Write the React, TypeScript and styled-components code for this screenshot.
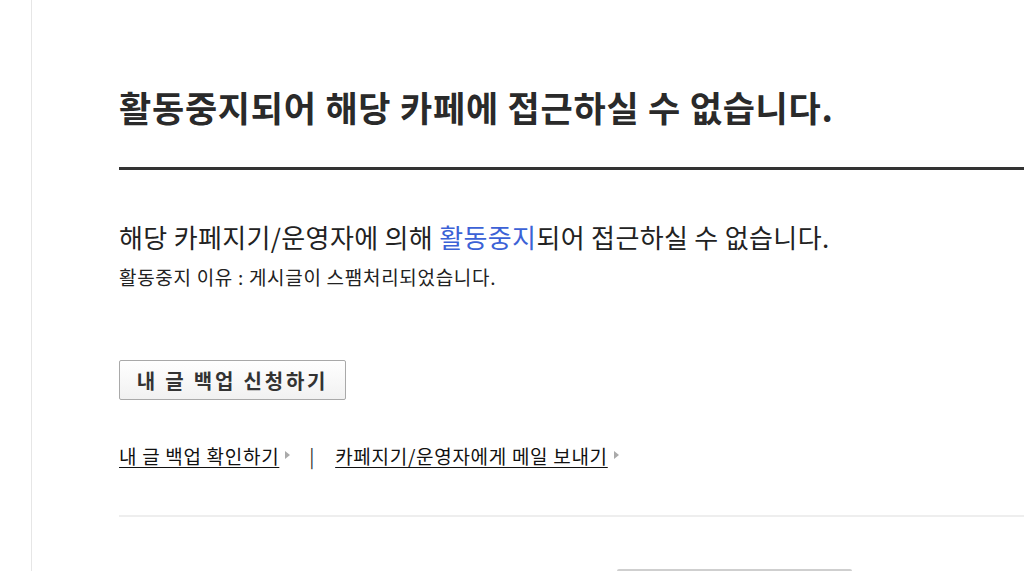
import React from 'react';
import styled, { createGlobalStyle } from 'styled-components';

// STYLES
const GlobalStyle = createGlobalStyle`
  html, body {
    margin: 0;
    padding: 0;
    background: #fff;
    overflow: hidden;
  }
  body {
    font-family: "Noto Sans CJK KR", "Noto Sans", sans-serif;
    color: #222;
  }
`;

const Page = styled.div`
  padding-left: 31px;
  height: 571px;
  overflow: hidden;
`;

const Frame = styled.div`
  border-left: 1px solid #e6e6e6;
  min-height: 571px;
  padding: 83px 0 0 87px;
`;

const Title = styled.h2`
  margin: 0;
  padding-bottom: 36px;
  border-bottom: 3px solid #333;
  font-size: 35px;
  line-height: 48px;
  font-weight: 700;
  color: #2a2a2a;
  letter-spacing: 0.75px;
  white-space: nowrap;
`;

const Message = styled.p`
  margin: 49px 0 0;
  font-size: 26px;
  line-height: 36px;
  color: #222;
  letter-spacing: 0.35px;
  white-space: nowrap;
`;

const Highlight = styled.span`
  color: #3c62d6;
`;

const Reason = styled.p`
  margin: 9px 0 0;
  font-size: 19px;
  line-height: 26px;
  color: #222;
  letter-spacing: 0.7px;
  white-space: nowrap;
`;

const BackupButton = styled.button`
  display: block;
  margin-top: 70px;
  width: 227px;
  height: 40px;
  border: 1px solid #a9a9a9;
  border-radius: 2px;
  background: linear-gradient(#ffffff, #f1f1f1);
  font-family: "Noto Sans CJK KR", sans-serif;
  font-size: 20px;
  font-weight: 700;
  letter-spacing: 2.8px;
  color: #333;
  cursor: pointer;
  padding: 0;
`;

const LinkRow = styled.div`
  display: flex;
  align-items: center;
  margin-top: 40px;
  height: 30px;
  font-size: 19px;
  letter-spacing: 0.7px;
  white-space: nowrap;
`;

const TextLink = styled.a`
  color: #111;
  text-decoration: underline;
  text-underline-offset: 3px;
  text-decoration-thickness: 1px;
`;

const Arrow = styled.span`
  display: inline-block;
  width: 0;
  height: 0;
  margin-left: 6px;
  border-left: 5px solid #aaa;
  border-top: 4px solid transparent;
  border-bottom: 4px solid transparent;
`;

const Sep = styled.span`
  margin: 0 20px 0 19px;
  color: #333;
`;

const Rule = styled.hr`
  margin: 45px 0 0;
  border: 0;
  border-top: 2px solid #eeeeee;
`;

const BottomBox = styled.div`
  margin: 52px 0 0 498px;
  width: 235px;
  height: 30px;
  border-top: 2px solid #cfcfcf;
  border-radius: 2px 2px 0 0;
`;

// COMPONENT
const App: React.FC = () => {
  return (
    <Page>
      <GlobalStyle />
      <Frame>
        <Title>활동중지되어 해당 카페에 접근하실 수 없습니다.</Title>

        <Message>
          해당 카페지기/운영자에 의해 <Highlight>활동중지</Highlight>되어 접근하실 수 없습니다.
        </Message>
        <Reason>활동중지 이유 : 게시글이 스팸처리되었습니다.</Reason>

        <BackupButton type="button">내 글 백업 신청하기</BackupButton>

        <LinkRow>
          <TextLink href="#">내 글 백업 확인하기</TextLink>
          <Arrow />
          <Sep>|</Sep>
          <TextLink href="#">카페지기/운영자에게 메일 보내기</TextLink>
          <Arrow />
        </LinkRow>

        <Rule />
        <BottomBox />
      </Frame>
    </Page>
  );
};

export default App;
